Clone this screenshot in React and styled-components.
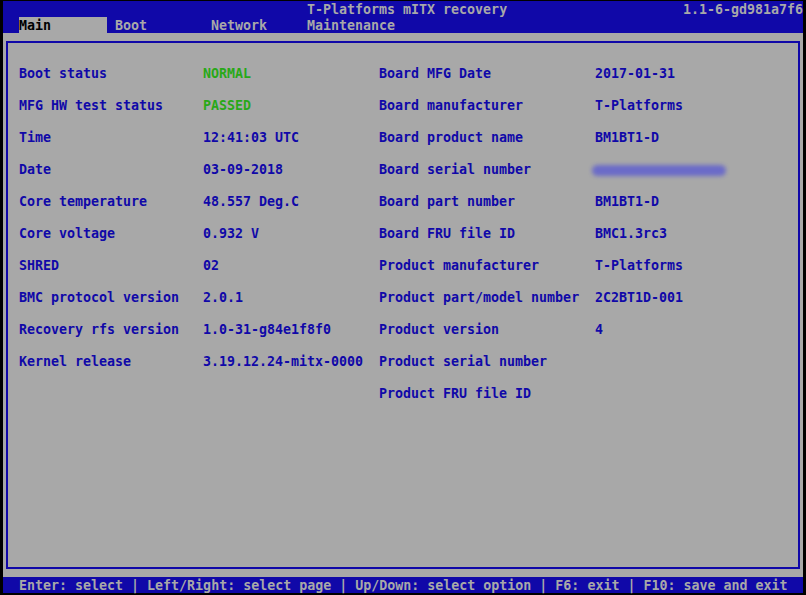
import styled, { createGlobalStyle } from 'styled-components';

const BLUE = '#1008a8';
const GREY = '#a8a8a8';
const GREEN = '#28a818';

const GlobalStyle = createGlobalStyle`
  html, body {
    margin: 0;
    padding: 0;
    background: #000;
  }
  body {
    width: 806px;
    height: 595px;
    overflow: hidden;
  }
  * {
    box-sizing: border-box;
  }
`;

const Screen = styled.div`
  margin: 1px 0 0 3px;
  width: 800px;
  height: 592px;
  background: ${GREY};
  display: flex;
  flex-direction: column;
  font-family: 'DejaVu Sans Mono', 'Liberation Mono', monospace;
  font-weight: bold;
  font-size: 13.3px;
  line-height: 16px;
  white-space: pre;
`;

const Header = styled.div`
  background: ${BLUE};
  color: ${GREY};
  display: flex;
  flex-direction: column;
`;

const TitleRow = styled.div`
  height: 16px;
  padding: 1px 0 0 304px;
  display: flex;
  justify-content: space-between;
`;

const TabRow = styled.div`
  height: 16px;
  display: flex;
  padding-left: 16px;
`;

const Tab = styled.div`
  width: 88px;
  height: 16px;
  padding-top: 1px;
  margin-right: 8px;
  background: ${({ $active }) => ($active ? GREY : 'transparent')};
  color: ${({ $active }) => ($active ? '#000' : GREY)};
`;

const Body = styled.div`
  flex: 1;
  padding: 8px 3px;
  display: flex;
`;

const Frame = styled.div`
  flex: 1;
  border: 2px solid ${BLUE};
  padding: 22px 0 0 11px;
  display: flex;
  color: ${BLUE};
`;

const Column = styled.div`
  width: ${({ $width }) => $width}px;
  display: flex;
  flex-direction: column;
`;

const Field = styled.div`
  height: 32px;
  padding-top: 1px;
  display: grid;
  grid-template-columns: ${({ $label }) => $label}px 1fr;
  align-items: start;
`;

const Value = styled.span`
  color: ${({ $ok }) => ($ok ? GREEN : BLUE)};
`;

const Redacted = styled.span`
  display: block;
  width: 134px;
  height: 11px;
  margin: 3px 0 0 -3px;
  border-radius: 6px;
  background: #5c5cd0;
  filter: blur(2px);
  opacity: 0.8;
`;

const Footer = styled.div`
  height: 16px;
  padding: 1px 0 0 16px;
  background: ${BLUE};
  color: ${GREY};
`;

const tabs = ['Main', 'Boot', 'Network', 'Maintenance'];

const leftFields = [
  ['Boot status', 'NORMAL', true],
  ['MFG HW test status', 'PASSED', true],
  ['Time', '12:41:03 UTC'],
  ['Date', '03-09-2018'],
  ['Core temperature', '48.557 Deg.C'],
  ['Core voltage', '0.932 V'],
  ['SHRED', '02'],
  ['BMC protocol version', '2.0.1'],
  ['Recovery rfs version', '1.0-31-g84e1f8f0'],
  ['Kernel release', '3.19.12.24-mitx-0000'],
];

const rightFields = [
  ['Board MFG Date', '2017-01-31'],
  ['Board manufacturer', 'T-Platforms'],
  ['Board product name', 'BM1BT1-D'],
  ['Board serial number', null, false, true],
  ['Board part number', 'BM1BT1-D'],
  ['Board FRU file ID', 'BMC1.3rc3'],
  ['Product manufacturer', 'T-Platforms'],
  ['Product part/model number', '2C2BT1D-001'],
  ['Product version', '4'],
  ['Product serial number', ''],
  ['Product FRU file ID', ''],
];

const renderFields = (fields, labelWidth) =>
  fields.map(([label, value, ok, hidden]) => (
    <Field key={label} $label={labelWidth}>
      <span>{label}</span>
      {hidden ? <Redacted /> : <Value $ok={ok}>{value}</Value>}
    </Field>
  ));

const App = () => {
  return (
    <>
      <GlobalStyle />
      <Screen>
        <Header>
          <TitleRow>
            <span>T-Platforms mITX recovery</span>
            <span>1.1-6-gd981a7f6</span>
          </TitleRow>
          <TabRow>
            {tabs.map((t, idx) => (
              <Tab key={t} $active={idx === 0}>
                {t}
              </Tab>
            ))}
          </TabRow>
        </Header>
        <Body>
          <Frame>
            <Column $width={360}>{renderFields(leftFields, 184)}</Column>
            <Column $width={400}>{renderFields(rightFields, 216)}</Column>
          </Frame>
        </Body>
        <Footer>
          Enter: select | Left/Right: select page | Up/Down: select option | F6: exit | F10: save and exit
        </Footer>
      </Screen>
    </>
  );
};

export default App;
